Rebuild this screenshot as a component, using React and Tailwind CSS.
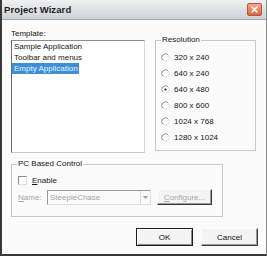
import React from "react";

const resolutions = ["320 x 240", "640 x 240", "640 x 480", "800 x 600", "1024 x 768", "1280 x 1024"];
const templates = ["Sample Application", "Toolbar and menus", "Empty Application"];

function Radio({ label, checked }) {
  return (
    <div className="flex items-center h-[16px] gap-[4px]">
      <svg width="9" height="9" viewBox="0 0 9 9" className="shrink-0">
        <circle cx="4.5" cy="4.5" r="3.6" fill="#ffffff" />
        <path d="M1.9 7.1 A3.6 3.6 0 0 1 7.1 1.9" fill="none" stroke="#8a8a8a" strokeWidth="1" />
        <path d="M7.1 1.9 A3.6 3.6 0 0 1 1.9 7.1" fill="none" stroke="#e2e2e2" strokeWidth="1" />
        {checked && <circle cx="4.5" cy="4.5" r="1.1" fill="#111111" />}
      </svg>
      <span>{label}</span>
    </div>
  );
}

function ClassicButton({ children, isDefault, disabled, className = "" }) {
  const base = isDefault
    ? "border border-[#1e1e1e] shadow-[inset_1px_1px_0_#ffffff,inset_-1px_-1px_0_#8a8a8a]"
    : "border border-t-[#ffffff] border-l-[#ffffff] border-r-[#3a3a3a] border-b-[#3a3a3a] shadow-[inset_-1px_-1px_0_#9a9a9a]";
  return (
    <div
      className={`${base} bg-[#f4f4f4] flex items-center justify-center ${disabled ? "text-[#a8a8a8]" : "text-[#111]"} ${className}`}
    >
      {children}
    </div>
  );
}

export default function App() {
  return (
    <div className="w-[267px] h-[256px] flex flex-col bg-[#fbfbfb] border-l-2 border-b-2 border-r border-l-[#3a3a3a] border-b-[#3a3a3a] border-r-[#8a8a8a] font-['Liberation_Sans',Arial,sans-serif] text-[8px] text-[#151515] leading-[11px] overflow-hidden">
      {/* Title bar */}
      <div className="h-[20px] shrink-0 flex items-center justify-between pl-[2px] pr-[4px] bg-gradient-to-b from-[#f0f1f3] to-[#cdd1d6] border-b border-[#a4a8ac]">
        <span className="font-bold text-[9.5px] text-[#1c1c1c] tracking-[0.1px]">Project Wizard</span>
        <div className="w-[15px] h-[13px] rounded-[2px] border border-[#b8553a] bg-gradient-to-b from-[#f4a888] to-[#d96442] flex items-center justify-center">
          <svg width="7" height="7" viewBox="0 0 7 7">
            <path d="M1 1 L6 6 M6 1 L1 6" stroke="#ffffff" strokeWidth="1.6" strokeLinecap="round" />
          </svg>
        </div>
      </div>

      {/* Body */}
      <div className="flex flex-col pl-[9px]">
        <div className="flex">
          {/* Template */}
          <div className="w-[134px] flex flex-col">
            <div className="mt-[8px] h-[11px]">Template:</div>
            <div className="mt-[1px] h-[113px] bg-white border border-t-[#8c8c8c] border-l-[#6a6a6a] border-r-[#d6d6d6] border-b-[#c8c8c8] flex flex-col">
              {templates.map((t, i) => (
                <div key={t} className="h-[11px] flex">
                  <span className={i === 2 ? "bg-[#3d8ed6] text-[#eaf4ff] pl-[2px] pr-[1px]" : "pl-[2px]"}>{t}</span>
                </div>
              ))}
            </div>
          </div>

          {/* Resolution */}
          <fieldset className="ml-[10px] mt-[14px] w-[101px] h-[117px] border border-[#c8c8c8] px-0 pb-0 flex flex-col">
            <legend className="ml-[5px] px-[1px] h-[12px] leading-[12px]">Resolution</legend>
            <div className="mt-[3px] pl-[5px] flex flex-col">
              {resolutions.map((r, i) => (
                <Radio key={r} label={r} checked={i === 2} />
              ))}
            </div>
          </fieldset>
        </div>

        {/* PC Based Control */}
        <fieldset className="mt-[5px] w-[212px] h-[59px] border border-[#c8c8c8] px-0 flex flex-col">
          <legend className="ml-[5px] px-[1px] h-[12px] leading-[12px]">PC Based Control</legend>
          <div className="mt-[4px] pl-[6px] h-[13px] flex items-center gap-[5px]">
            <div className="w-[9px] h-[9px] bg-white border border-t-[#8a8a8a] border-l-[#8a8a8a] border-r-[#e0e0e0] border-b-[#e0e0e0]" />
            <span>
              <span className="underline">E</span>nable
            </span>
          </div>
          <div className="mt-[2px] pl-[6px] flex items-center">
            <span className="w-[29px] text-[#a4a4a4]">
              <span className="underline">N</span>ame:
            </span>
            <div className="w-[104px] h-[15px] bg-[#fafafa] border border-t-[#9a9a9a] border-l-[#9a9a9a] border-r-[#dedede] border-b-[#dedede] flex items-center">
              <span className="flex-1 pl-[2px] text-[#a4a4a4]">SteepleChase</span>
              <div className="w-[10px] h-[13px] border-l border-[#dcdcdc] flex items-center justify-center">
                <svg width="5" height="3" viewBox="0 0 5 3">
                  <path d="M0 0 L5 0 L2.5 3 Z" fill="#9a9a9a" />
                </svg>
              </div>
            </div>
            <ClassicButton disabled className="ml-[6px] w-[55px] h-[16px]">
              <span>
                <span className="underline">C</span>onfigure...
              </span>
            </ClassicButton>
          </div>
        </fieldset>
      </div>

      {/* Buttons */}
      <div className="mt-[11px] flex justify-end gap-[8px] pr-[8px]">
        <ClassicButton isDefault className="w-[57px] h-[18px]">OK</ClassicButton>
        <ClassicButton className="w-[57px] h-[18px]">Cancel</ClassicButton>
      </div>
    </div>
  );
}
